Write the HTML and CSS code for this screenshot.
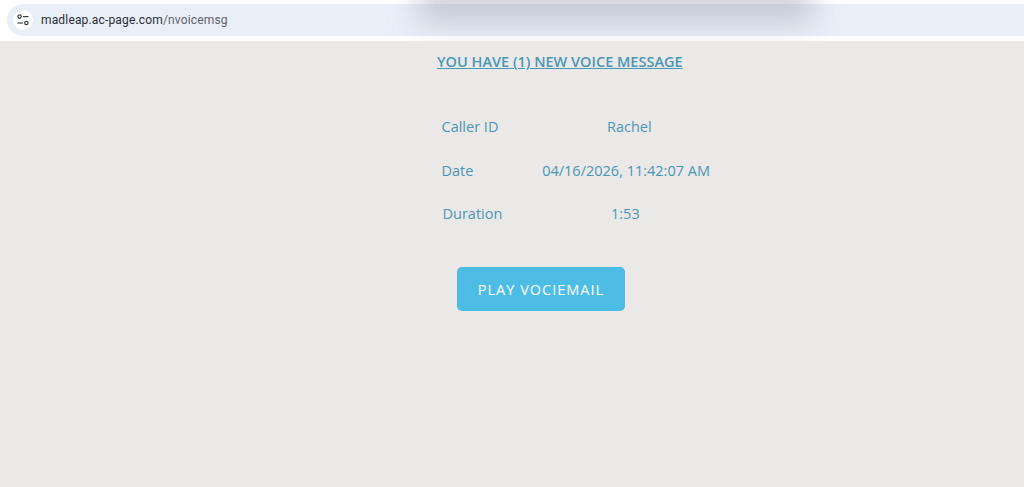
FILE: index.html
```html
<!DOCTYPE html>
<html lang="en">
<head>
  <meta charset="UTF-8">
  <meta name="viewport" content="width=device-width, initial-scale=1.0">
  <title>New voice message</title>
  <link rel="stylesheet" href="styles.css">
</head>
<body>
  <div class="browser-bar">
    <div class="address">
      <span class="site-icon">
        <svg width="14" height="14" viewBox="0 0 14 14" fill="none" stroke="#3c4043" stroke-width="1.2">
          <circle cx="3.6" cy="3.6" r="1.7"/>
          <path d="M7 3.6h5.5"/>
          <circle cx="10.4" cy="10" r="1.7"/>
          <path d="M1.5 10h5.5"/>
        </svg>
      </span>
      <span class="url">madleap.ac-page.com<span class="url-path">/nvoicemsg</span></span>
    </div>
    <div class="bar-shadow"></div>
  </div>

  <main class="message">
    <h1 class="title">YOU HAVE (1) NEW VOICE MESSAGE</h1>

    <div class="details">
      <div class="row">
        <span class="label">Caller ID</span>
        <span class="value value-name">Rachel</span>
      </div>
      <div class="row">
        <span class="label">Date</span>
        <span class="value">04/16/2026, 11:42:07 AM</span>
      </div>
      <div class="row">
        <span class="label label-duration">Duration</span>
        <span class="value value-time">1:53</span>
      </div>
    </div>

    <button class="btn">PLAY VOCIEMAIL</button>
  </main>
</body>
</html>
```

FILE: styles.css
```css
* {
  box-sizing: border-box;
  margin: 0;
  padding: 0;
}

html, body {
  height: 100%;
}

body {
  font-family: "Open Sans", sans-serif;
  background: #eae9e7;
  color: #4a96b6;
  overflow: hidden;
}

.browser-bar {
  position: relative;
  height: 41px;
  padding: 4px 0 5px 7px;
  background: #fff;
  overflow: hidden;
}

.address {
  display: flex;
  align-items: center;
  gap: 8px;
  height: 32px;
  padding-left: 6px;
  background: #e9eff9;
  border-radius: 16px 0 0 16px;
}

.site-icon {
  display: flex;
  align-items: center;
  justify-content: center;
  width: 20px;
  height: 20px;
  background: #fff;
  border-radius: 50%;
}

.url {
  font-family: Roboto, sans-serif;
  font-size: 12px;
  letter-spacing: 0.16px;
  color: #2b2d31;
}

.url-path {
  color: #5f6368;
}

/* blurred shadow of a dialog that sits above the page */
.bar-shadow {
  position: absolute;
  left: 418px;
  top: -34px;
  width: 395px;
  height: 58px;
  background: rgba(120, 125, 140, 0.3);
  filter: blur(14px);
}

.message {
  width: 300px;
  margin-left: 410px;
  padding-top: 11px;
}

.title {
  margin-left: 27px;
  font-size: 14.5px;
  line-height: 19px;
  font-weight: 600;
  text-decoration: underline;
  white-space: nowrap;
}

.details {
  display: flex;
  flex-direction: column;
  gap: 23.5px;
  margin-top: 46px;
}

.row {
  display: flex;
  height: 20px;
  line-height: 20px;
  font-size: 14.5px;
}

.label {
  width: 138.5px;
  padding-left: 31.5px;
}

.label-duration {
  padding-left: 32.5px;
}

.value {
  white-space: nowrap;
}

.value-name {
  padding-left: 58.5px;
}

.value-time {
  padding-left: 62.5px;
}

.btn {
  display: block;
  width: 168px;
  height: 44px;
  margin-top: 43px;
  margin-left: 47px;
  background: #4dbde6;
  border: none;
  border-radius: 5px;
  color: #fff;
  font-family: inherit;
  font-size: 14.5px;
  letter-spacing: 1px;
}
```
